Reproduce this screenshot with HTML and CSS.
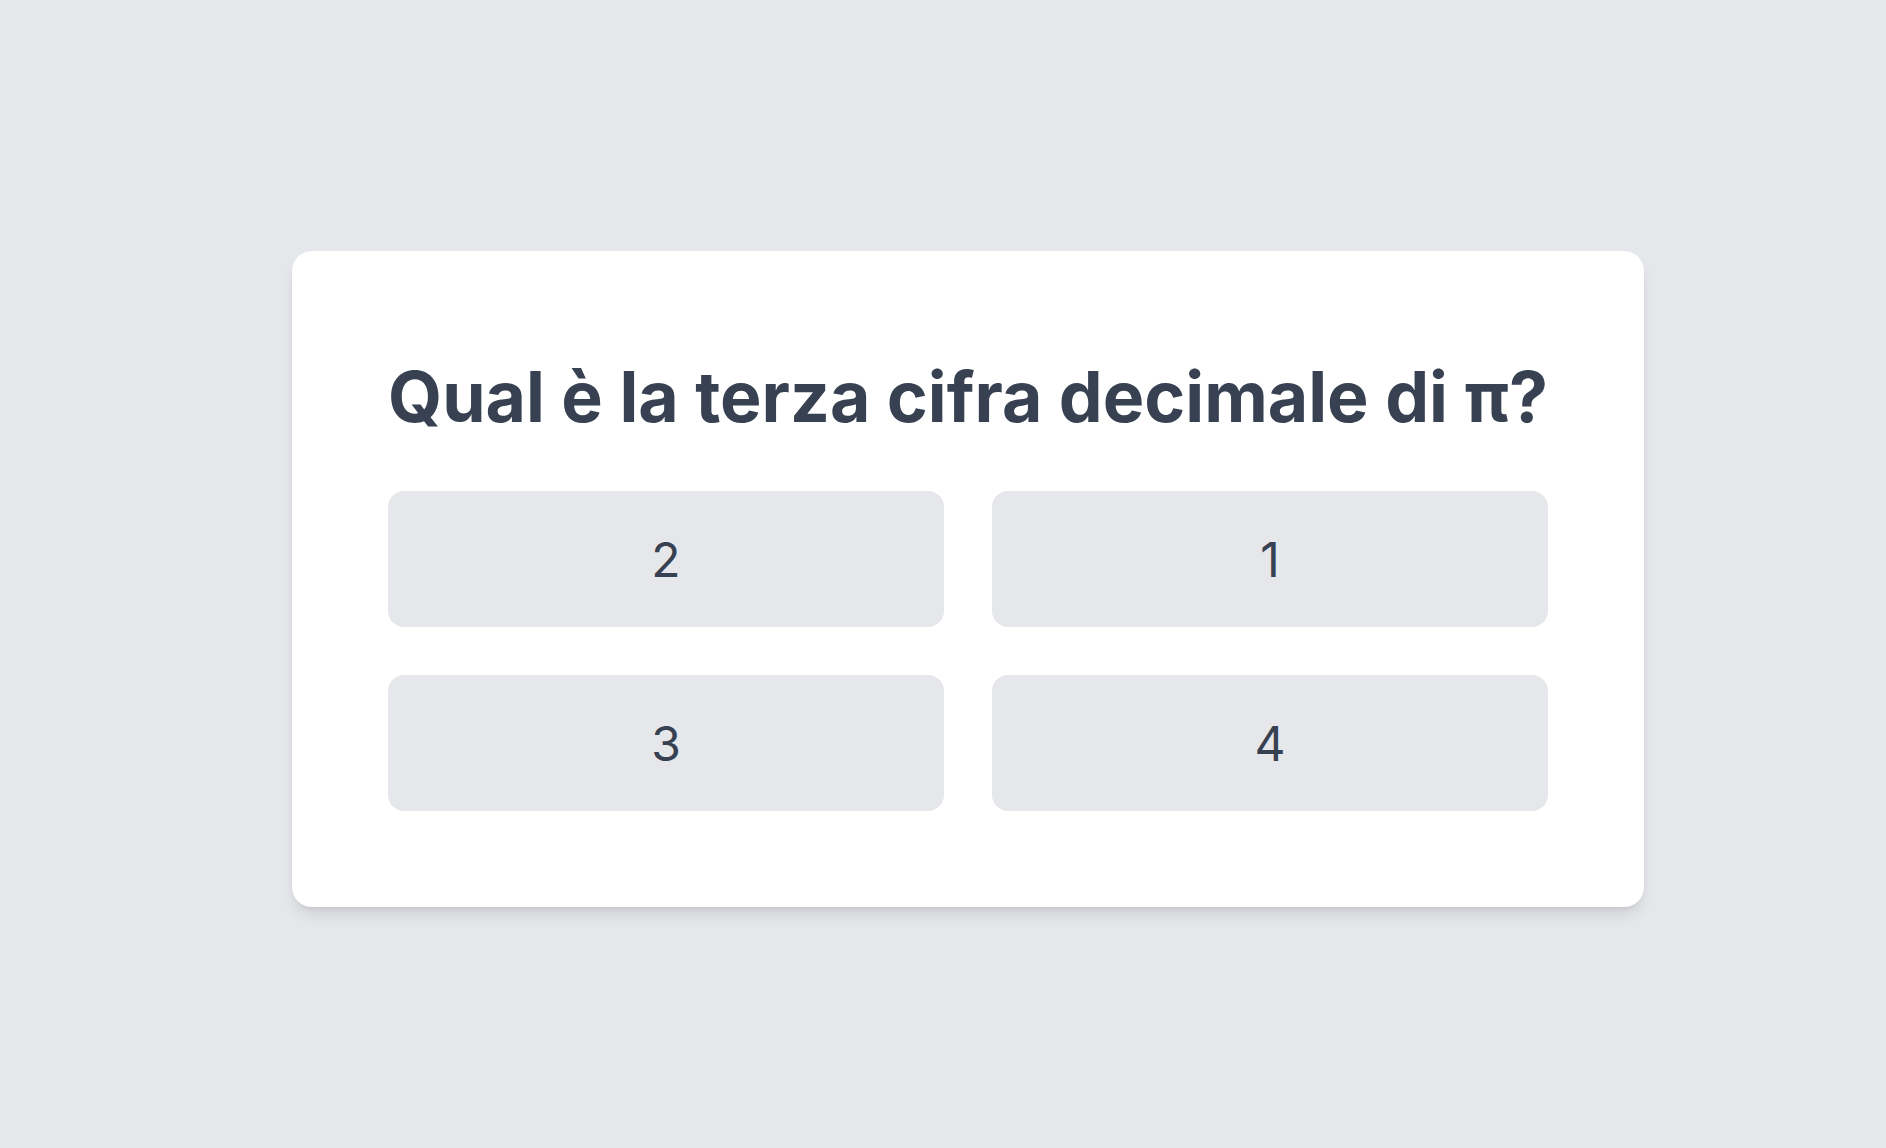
FILE: index.html
```html
<!DOCTYPE html>
<html lang="it">
<head>
<meta charset="utf-8">
<title>Quiz</title>
<link rel="stylesheet" href="styles.css">
</head>
<body>
<main class="page">
  <section class="card">
    <h1 class="question">Qual è la terza cifra decimale di π?</h1>
    <div class="answers">
      <button class="answer">2</button>
      <button class="answer">1</button>
      <button class="answer">3</button>
      <button class="answer">4</button>
    </div>
  </section>
</main>
</body>
</html>
```
FILE: styles.css
```css
html, body {
  margin: 0;
  padding: 0;
}
body {
  background: #e5e7eb;
  font-family: Inter, "Noto Sans", sans-serif;
  color: #374151;
}
.page {
  min-height: 1148px;
  padding: 251px 0 0 50px;
  box-sizing: border-box;
  display: flex;
  justify-content: center;
  align-items: flex-start;
}
.card {
  width: 1352px;
  box-sizing: border-box;
  background: #fff;
  border-radius: 20px;
  padding: 96px;
  box-shadow: 0 10px 15px -3px rgba(0,0,0,0.1), 0 4px 6px -4px rgba(0,0,0,0.1);
}
.question {
  margin: 0 0 45px;
  font-size: 69.7px;
  line-height: 99px;
  font-weight: 700;
  color: #374151;
  white-space: nowrap;
}
.answers {
  display: grid;
  grid-template-columns: 1fr 1fr;
  gap: 48px;
}
.answer {
  height: 136px;
  border: 0;
  border-radius: 16px;
  background: #e5e7eb;
  color: #374151;
  font-family: Inter, "Noto Sans", sans-serif;
  font-size: 48px;
  font-weight: 400;
  padding: 0;
}
```
